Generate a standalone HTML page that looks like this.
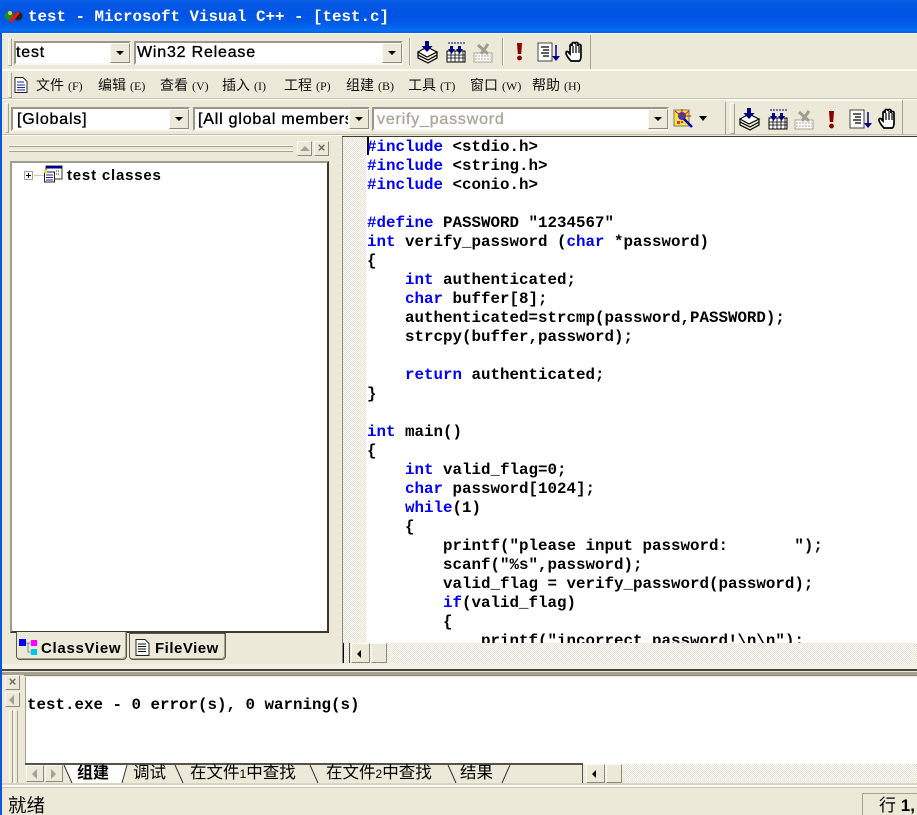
<!DOCTYPE html>
<html><head><meta charset="utf-8"><style>
html,body{margin:0;padding:0;width:917px;height:815px;overflow:hidden}
body{position:relative;background:#ECE9D8;font-family:"Liberation Sans","Noto Sans CJK SC",sans-serif;color:#000}
div,svg,span.a{position:absolute}
.t{white-space:pre;line-height:19px}
.m{font-family:"Liberation Mono","Noto Sans CJK SC",monospace;font-weight:bold;font-size:15.83px}
.k{color:#0000ff}
.code{left:367px;top:138px;width:550px;height:505px;overflow:hidden;white-space:pre;line-height:19px}
.combo{background:#fff;border:2px solid;border-color:#9a978a #f8f7f0 #f8f7f0 #9a978a;box-sizing:border-box}
.btn{background:#ECE9D8;border:1px solid;border-color:#fbfaf4 #8d8a7d #8d8a7d #fbfaf4;box-sizing:border-box}
.dd:after{content:"";position:absolute;left:50%;top:50%;margin:-2px 0 0 -4px;border:4px solid transparent;border-top:4px solid #000;border-bottom:0}
.s{font-size:15.5px;font-weight:bold;letter-spacing:.2px;white-space:pre;line-height:19px}
.f{font-size:16px;font-weight:normal;letter-spacing:.8px;-webkit-text-stroke:.35px #000}
.menu{font-size:14px;white-space:pre;top:76px;line-height:18px;color:#111}
.menu small{font-size:12px;margin-left:4px;font-weight:normal;font-family:"Liberation Serif",serif}
.grip{border:1px solid;border-color:#fbfaf4 #a5a291 #a5a291 #fbfaf4;box-sizing:border-box}
.dith{background:repeating-conic-gradient(#ffffff 0 25%,#E4E1D0 0 50%) 0 0/2px 2px}
.hl{background:#fbfaf4}.sh{background:#a5a291}
.tb{font-size:16.5px}.tb i{font-style:normal;font-size:12px}
</style></head><body>
<svg width="0" height="0" style="position:absolute">
<defs>
<g id="build"><path d="M1 11l9-5 10 5-10 5z" fill="#fff" stroke="#000" stroke-width="1.200"/><path d="M1 11v3l10 5 9-5v-3M1 14v3l10 5 9-5v-3" fill="none" stroke="#000" stroke-width="1.200"/><path d="M8 0h4v5h3.500L10 11 4.500 5H8z" fill="#000080"/></g>
<g id="comp"><rect x="2" y="10" width="18" height="11" fill="#fff" stroke="#000"/><path d="M2 14h18M2 17h18M6 10v11M10 10v11M14 10v11M18 10v11" stroke="#000" stroke-width=".8"/><path d="M5 5h3v3h2l-3.500 5-3.500-5h2zM13 5h3v3h2l-3.500 5-3.500-5h2z" fill="#000080"/><path d="M3 2h17" stroke="#000080" stroke-dasharray="2 1"/></g>
<g id="stop"><rect x="2" y="12" width="18" height="9" fill="#fff" stroke="#a5a291"/><path d="M3 15h16M3 18h16" stroke="#a5a291" stroke-dasharray="2 1"/><path d="M6 4l10 9M16 3l-7 10" stroke="#a09d8e" stroke-width="3"/></g>
<g id="excl"><path d="M3 1h5l-.8 11H3.800z" fill="#8c0000"/><circle cx="5.500" cy="16" r="2.400" fill="#8c0000"/></g>
<g id="step"><rect x="1" y="1" width="14" height="18" fill="#fff" stroke="#444"/><path d="M4 5h8M6 8h6M4 11h8M6 14h6" stroke="#000" stroke-width="1.200"/><path d="M19 3v12" stroke="#000080" stroke-width="1.500"/><path d="M15 14h8l-4 5z" fill="#000080"/></g>
<g id="hand"><path d="M6 20c-2-2-5-6-5-8s2-2 3 0l1 1V5c0-2 2-2 2 0V3c0-2 3-2 3 0v0c0-2 3-2 3 0v2c0-2 3-2 3 0v10c0 3-1 5-2 5z" fill="#fff" stroke="#000" stroke-width="1.700"/><path d="M8 5v7M11 3v9M14 5v7" stroke="#000" stroke-width="1.200"/></g>
<g id="find"><rect x="1" y="2" width="15" height="16" fill="#f6e63c" stroke="#777"/><circle cx="9" cy="8" r="4" fill="#2a3fd0"/><circle cx="9" cy="8" r="1.500" fill="#e01010"/><path d="M2 3l5 4M16 3l-5 4M9 1v4M13 8h5" stroke="#e01010"/><path d="M4 13h3v3H4zM8 13h2v2H8z" fill="#d8382c"/><path d="M11 11l8 8" stroke="#0000b0" stroke-width="2.500"/></g>
</defs></svg>

<!-- title bar -->
<div style="left:0;top:0;width:917px;height:33px;background:linear-gradient(#0a5fe8 0,#0458e4 3px,#0054e3 12px,#0058e6 22px,#066ef2 30px,#0a63de 33px)"></div>
<div style="left:0;top:33px;width:917px;height:1px;background:#f4f5ff"></div>
<svg style="left:4px;top:8px" width="19" height="16" viewBox="0 0 19 16"><ellipse cx="5" cy="8" rx="4.500" ry="4.500" fill="#1a8a2a"/><ellipse cx="14" cy="8" rx="4.500" ry="4.500" fill="#222"/><path d="M5 13L13 3l3 2-8 10z" fill="#e01818"/><circle cx="6" cy="5" r="2" fill="#f0d020"/></svg>
<div class="t m" style="left:28px;top:7px;color:#fff;line-height:20px">test - Microsoft Visual C++ - [test.c]</div>
<!-- left window border -->
<div style="left:0;top:33px;width:2px;height:782px;background:#0a56dc"></div>

<!-- toolbar separators -->
<div class="hl" style="left:2px;top:69px;width:915px;height:2px"></div>
<div style="left:2px;top:98px;width:915px;height:1px;background:#c9c6b5"></div>
<div class="hl" style="left:2px;top:99px;width:915px;height:1px"></div>

<!-- row 1 -->
<div class="grip" style="left:8px;top:38px;width:4px;height:28px"></div>
<div class="combo" style="left:14px;top:41px;width:117px;height:24px"></div>
<div class="s f" style="left:16px;top:43px">test</div>
<div class="btn dd" style="left:110px;top:43px;width:20px;height:20px"></div>
<div class="combo" style="left:134px;top:41px;width:269px;height:24px"></div>
<div class="s f" style="left:137px;top:43px">Win32 Release</div>
<div class="btn dd" style="left:382px;top:43px;width:20px;height:20px"></div>
<div class="sh" style="left:409px;top:38px;width:1px;height:27px"></div><div class="hl" style="left:410px;top:38px;width:1px;height:27px"></div>
<svg style="left:417px;top:41px" width="22" height="24"><use href="#build"/></svg>
<svg style="left:445px;top:41px" width="22" height="24"><use href="#comp"/></svg>
<svg style="left:472px;top:41px" width="22" height="24"><use href="#stop"/></svg>
<div class="sh" style="left:502px;top:38px;width:1px;height:27px"></div><div class="hl" style="left:503px;top:38px;width:1px;height:27px"></div>
<svg style="left:514px;top:42px" width="12" height="20"><use href="#excl"/></svg>
<svg style="left:537px;top:42px" width="24" height="20"><use href="#step"/></svg>
<svg style="left:565px;top:41px" width="20" height="22"><use href="#hand"/></svg>
<div class="sh" style="left:590px;top:35px;width:1px;height:34px"></div>

<!-- row 2 -->
<div class="grip" style="left:8px;top:72px;width:4px;height:26px"></div>
<svg style="left:14px;top:77px" width="14" height="16" viewBox="0 0 14 16"><path d="M1 .5h8l4 4v11H1z" fill="#fff" stroke="#222"/><path d="M3 5h7M3 8h8M3 10.500h8M3 13h8" stroke="#1a2aa0"/></svg>
<div class="t menu" style="left:36px">文件<small>(F)</small></div>
<div class="t menu" style="left:98px">编辑<small>(E)</small></div>
<div class="t menu" style="left:160px">查看<small>(V)</small></div>
<div class="t menu" style="left:222px">插入<small>(I)</small></div>
<div class="t menu" style="left:284px">工程<small>(P)</small></div>
<div class="t menu" style="left:346px">组建<small>(B)</small></div>
<div class="t menu" style="left:408px">工具<small>(T)</small></div>
<div class="t menu" style="left:470px">窗口<small>(W)</small></div>
<div class="t menu" style="left:532px">帮助<small>(H)</small></div>

<!-- row 3 -->
<div class="grip" style="left:5px;top:103px;width:4px;height:30px"></div>
<div class="combo" style="left:11px;top:107px;width:179px;height:24px"></div>
<div class="s f" style="left:17px;top:110px">[Globals]</div>
<div class="btn dd" style="left:169px;top:109px;width:20px;height:20px"></div>
<div class="combo" style="left:193px;top:107px;width:177px;height:24px"></div>
<div class="s f" style="left:198px;top:110px;width:150px;overflow:hidden">[All global members]</div>
<div class="btn dd" style="left:349px;top:109px;width:20px;height:20px"></div>
<div class="combo" style="left:372px;top:107px;width:297px;height:24px"></div>
<div class="s f" style="left:377px;top:110px;color:#a9a899;-webkit-text-stroke:.35px #a9a899">verify_password</div>
<div class="btn dd" style="left:648px;top:109px;width:20px;height:20px"></div>
<svg style="left:673px;top:108px" width="22" height="22"><use href="#find"/></svg>
<div style="left:699px;top:116px;width:0;height:0;border:4.500px solid transparent;border-top:5px solid #000;border-bottom:0"></div>
<div class="sh" style="left:725px;top:102px;width:1px;height:33px"></div>
<div class="grip" style="left:730px;top:103px;width:5px;height:31px"></div>
<div class="hl" style="left:726px;top:100px;width:176px;height:1px"></div>
<svg style="left:739px;top:108px" width="22" height="24"><use href="#build"/></svg>
<svg style="left:767px;top:108px" width="22" height="24"><use href="#comp"/></svg>
<svg style="left:793px;top:108px" width="22" height="24"><use href="#stop"/></svg>
<svg style="left:826px;top:110px" width="12" height="20"><use href="#excl"/></svg>
<svg style="left:849px;top:109px" width="24" height="20"><use href="#step"/></svg>
<svg style="left:878px;top:108px" width="20" height="22"><use href="#hand"/></svg>
<div class="sh" style="left:902px;top:100px;width:1px;height:35px"></div>
<div class="sh" style="left:2px;top:134px;width:915px;height:1px;opacity:.6"></div>
<div class="hl" style="left:2px;top:135px;width:340px;height:1px"></div>

<!-- left pane -->
<div class="hl" style="left:9px;top:145px;width:284px;height:1px"></div>
<div class="sh" style="left:9px;top:146px;width:284px;height:1px"></div>
<div class="hl" style="left:9px;top:150px;width:284px;height:1px"></div>
<div class="sh" style="left:9px;top:151px;width:284px;height:1px"></div>
<div class="btn" style="left:297px;top:141px;width:15px;height:15px"></div>
<div style="left:300px;top:146px;width:0;height:0;border:5px solid transparent;border-bottom:5px solid #a5a291;border-top:0"></div>
<div class="btn" style="left:314px;top:141px;width:15px;height:15px;color:#6a6a60;font:bold 13px/12px 'Liberation Sans';text-align:center">×</div>
<div style="left:10px;top:161px;width:319px;height:472px;background:#fff;border:2px solid;border-color:#a09d8e #3a3a32 #3a3a32 #a09d8e;box-sizing:border-box"></div>
<div style="left:24px;top:171px;width:9px;height:9px;border:1px solid #a5a291;box-sizing:border-box;background:#fff"></div>
<div style="left:26px;top:175px;width:5px;height:1px;background:#000"></div>
<div style="left:28px;top:173px;width:1px;height:5px;background:#000"></div>
<div style="left:34px;top:175px;width:10px;height:1px;background:#ccc"></div>
<svg style="left:44px;top:165px" width="19" height="18" viewBox="0 0 19 18"><rect x="2" y="1" width="16" height="13" fill="#fff" stroke="#333"/><rect x="2" y="1" width="16" height="2.500" fill="#000080"/><rect x="0.500" y="7" width="10" height="10" fill="#fff" stroke="#222"/><path d="M2 10h7M2 12.500h7M2 15h7" stroke="#1a2aa0"/><rect x="0" y="5" width="3" height="3" fill="#e8d838"/><path d="M12 6h4M12 9h4" stroke="#333" stroke-dasharray="1 1"/></svg>
<div class="s" style="left:67px;top:166px;letter-spacing:.8px;font-size:15px">test classes</div>

<!-- tabs -->
<div style="left:16px;top:632px;width:111px;height:28px;background:#ECE9D8;border:1px solid #5a584c;border-top:0;border-radius:0 0 4px 4px;box-sizing:border-box;box-shadow:inset -1px -1px #a5a291"></div>
<div style="left:129px;top:633px;width:97px;height:27px;background:#ECE9D8;border:1px solid #5a584c;border-radius:0 0 4px 4px;box-sizing:border-box;box-shadow:inset -1px -1px #a5a291"></div>
<svg style="left:18px;top:639px" width="20" height="17"><rect width="7" height="7" x="1" y="0" fill="#0000ff"/><rect width="6" height="6" x="13" y="1" fill="#ff00ff"/><rect width="6" height="6" x="13" y="10" fill="#00c8e8"/><path d="M8 4h5M10 4v9h3" stroke="#888" fill="none"/></svg>
<div class="s" style="left:41px;top:639px;font-size:15px;letter-spacing:.7px">ClassView</div>
<svg style="left:135px;top:639px" width="15" height="17"><path d="M1 .5h9l4 4v12H1z" fill="#fff" stroke="#222"/><path d="M3 5h8M3 7.500h8M3 10h8M3 12.500h8" stroke="#111"/></svg>
<div class="s" style="left:155px;top:639px;font-size:15px;letter-spacing:.5px">FileView</div>

<!-- editor -->
<div style="left:342px;top:136px;width:1px;height:527px;background:#8d8a7d"></div>
<div style="left:342px;top:136px;width:575px;height:1px;background:#3a3a32"></div>
<div class="dith" style="left:343px;top:137px;width:23px;height:506px"></div>
<div style="left:366px;top:137px;width:551px;height:506px;background:#fff"></div>
<div style="left:367px;top:137px;width:2px;height:18px;background:#000"></div>
<div class="code m"><span class="k">#include</span> &lt;stdio.h&gt;
<span class="k">#include</span> &lt;string.h&gt;
<span class="k">#include</span> &lt;conio.h&gt;

<span class="k">#define</span> PASSWORD "1234567"
<span class="k">int</span> verify_password (<span class="k">char</span> *password)
{
    <span class="k">int</span> authenticated;
    <span class="k">char</span> buffer[8];
    authenticated=strcmp(password,PASSWORD);
    strcpy(buffer,password);

    <span class="k">return</span> authenticated;
}

<span class="k">int</span> main()
{
    <span class="k">int</span> valid_flag=0;
    <span class="k">char</span> password[1024];
    <span class="k">while</span>(1)
    {
        printf("please input password:       ");
        scanf("%s",password);
        valid_flag = verify_password(password);
        <span class="k">if</span>(valid_flag)
        {
            printf("incorrect password!\n\n");</div>

<!-- editor scrollbar -->
<div class="dith" style="left:343px;top:643px;width:574px;height:21px"></div>
<div style="left:343px;top:643px;width:1px;height:20px;background:#000"></div>
<div style="left:349px;top:643px;width:2px;height:20px;background:#ECE9D8;border-left:1px solid #555"></div>
<div class="btn" style="left:351px;top:643px;width:19px;height:20px"></div>
<div style="left:357px;top:650px;width:0;height:0;border:4px solid transparent;border-right:4px solid #000;border-left:0"></div>
<div class="btn" style="left:371px;top:643px;width:16px;height:20px"></div>

<!-- splitter -->
<div style="left:2px;top:664px;width:915px;height:5px;background:#f3f1e6"></div>
<div style="left:2px;top:669px;width:915px;height:2px;background:#45453c"></div>
<div style="left:2px;top:672px;width:915px;height:3px;background:#a5a291"></div>

<!-- output -->
<div style="left:24px;top:675px;width:893px;height:1px;background:#8d8a7d"></div>
<div style="left:25px;top:677px;width:892px;height:87px;background:#fff;border-left:1px solid #a5a291;box-sizing:border-box"></div>
<div class="btn" style="left:5px;top:675px;width:15px;height:15px;color:#6a6a60;font:bold 13px/12px 'Liberation Sans';text-align:center">×</div>
<div class="btn" style="left:5px;top:692px;width:15px;height:15px"></div>
<div style="left:9px;top:695px;width:0;height:0;border:5px solid transparent;border-right:5px solid #a5a291;border-left:0"></div>
<div class="grip" style="left:9px;top:710px;width:4px;height:74px"></div>
<div class="grip" style="left:14px;top:710px;width:4px;height:74px"></div>
<div class="t m" style="left:27px;top:696px">test.exe - 0 error(s), 0 warning(s)</div>

<!-- output tabs -->
<div style="left:25px;top:763px;width:558px;height:2px;background:#55544a"></div>
<div style="left:25px;top:765px;width:558px;height:18px;background:#ECE9D8"></div>
<div class="btn" style="left:26px;top:765px;width:18px;height:17px"></div>
<div style="left:32px;top:769px;width:0;height:0;border:5px solid transparent;border-right:5px solid #a5a291;border-left:0"></div>
<div class="btn" style="left:45px;top:765px;width:18px;height:17px"></div>
<div style="left:51px;top:769px;width:0;height:0;border:5px solid transparent;border-left:5px solid #a5a291;border-right:0"></div>
<svg style="left:62px;top:764px" width="460" height="20" fill="none" stroke="#333"><path d="M2 1l8 18h50l5-18z" fill="#fff" stroke="none"/><path d="M2 1l8 18M60 19l5-18M113 1l8 18M248 1l8 18M386 1l8 18M440 19l8-18"/></svg>
<div class="t" style="left:77px;top:764px;font-size:16px;font-weight:bold">组建</div>
<div class="t tb" style="left:133px;top:764px">调试</div>
<div class="t tb" style="left:190px;top:764px">在文件<i>1</i>中查找</div>
<div class="t tb" style="left:326px;top:764px">在文件<i>2</i>中查找</div>
<div class="t tb" style="left:460px;top:764px">结果</div>
<div style="left:582px;top:764px;width:1px;height:19px;background:#55544a"></div>
<div class="dith" style="left:584px;top:764px;width:333px;height:19px"></div>
<div class="btn" style="left:586px;top:764px;width:19px;height:19px"></div>
<div style="left:592px;top:770px;width:0;height:0;border:4px solid transparent;border-right:4px solid #000;border-left:0"></div>
<div class="btn" style="left:606px;top:764px;width:16px;height:19px"></div>

<!-- status bar -->
<div style="left:2px;top:783px;width:915px;height:2px;background:#d8d5c4"></div>
<div class="hl" style="left:2px;top:785px;width:915px;height:2px"></div>
<div style="left:2px;top:787px;width:915px;height:1px;background:#c9c6b5"></div>
<div class="t" style="left:8px;top:796px;font-size:18.5px;line-height:20px">就绪</div>
<div style="left:862px;top:793px;width:60px;height:30px;border:1px solid #a5a291;border-right:0;box-sizing:border-box"></div>
<div class="t" style="left:879px;top:796px;font-size:17px;line-height:20px;font-weight:normal">行 <b>1,</b></div>
</body></html>
